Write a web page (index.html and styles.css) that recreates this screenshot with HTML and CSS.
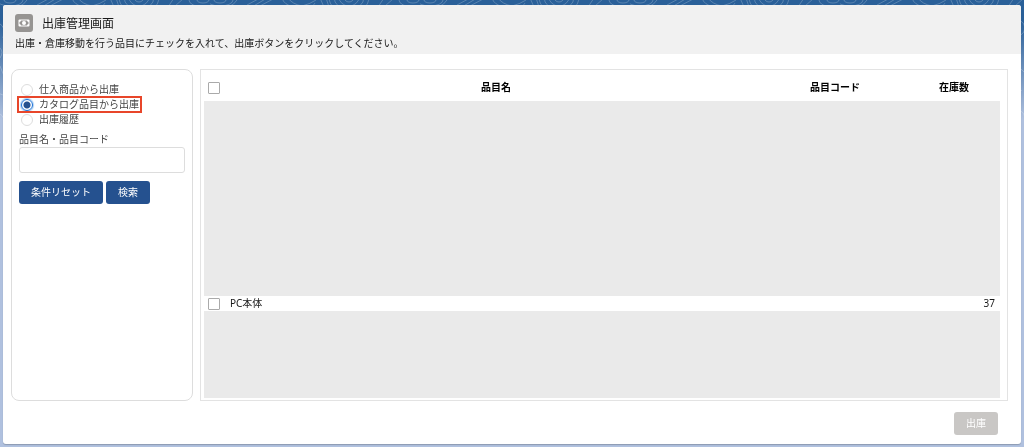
FILE: index.html
```html
<!DOCTYPE html>
<html lang="ja">
<head>
    <meta charset="UTF-8">
    <meta name="viewport" content="width=device-width, initial-scale=1.0">
    <title>出庫管理画面</title>
    <link rel="stylesheet" href="styles.css">
</head>
<body>
    <svg class="backdrop" aria-hidden="true">
        <defs>
            <pattern id="contour" width="210" height="90" patternUnits="userSpaceOnUse">
                <g fill="none" stroke="#fff" stroke-opacity="0.22">
                    <ellipse cx="10" cy="0" rx="6" ry="3"/>
                    <ellipse cx="10" cy="0" rx="13" ry="6"/>
                    <path d="M27 0Q24 5 18 7M37 5 50 -2M42 7 57 -2M48 7 65 -2"/>
                    <path d="M72 -2Q74 5 84 7M78 -2Q82 4 92 6M106 0Q100 4 92 6"/>
                    <path d="M110 -2 114 7M116 -2 119 7M102 7 105 3"/>
                    <ellipse cx="139" cy="-3" rx="5" ry="5"/>
                    <ellipse cx="139" cy="-3" rx="10" ry="9"/>
                    <ellipse cx="139" cy="-3" rx="15" ry="13"/>
                    <ellipse cx="139" cy="-3" rx="20" ry="17"/>
                    <path d="M168 7 174 -2M174 7 184 -2"/>
                    <ellipse cx="203" cy="0" rx="6" ry="3"/>
                    <ellipse cx="203" cy="0" rx="14" ry="7"/>
                    <path d="M0 24Q6 27 3 38M0 48Q4 52 0 58M0 66 4 76"/>
                    <path d="M180 20Q190 28 180 36M188 44Q180 52 190 60M178 66 190 78"/>
                </g>
            </pattern>
        </defs>
        <rect width="100%" height="120" fill="url(#contour)"/>
    </svg>

    <div class="card">
        <header class="card-header">
            <div class="title-row">
                <svg class="title-icon" viewBox="0 0 18 18" aria-hidden="true">
                    <rect width="18" height="18" rx="3" fill="#969492"/>
                    <rect x="3.5" y="5.5" width="11" height="7" rx="1" fill="#fff"/>
                    <path d="M6 6.5h6a1.6 1.6 0 0 0 1.5 1.5v2a1.6 1.6 0 0 0-1.5 1.5H6A1.6 1.6 0 0 0 4.500 10V8A1.6 1.6 0 0 0 6 6.500z" fill="#969492"/>
                    <circle cx="9" cy="9" r="2" fill="#fff"/>
                </svg>
                <h1>出庫管理画面</h1>
            </div>
            <p>出庫・倉庫移動を行う品目にチェックを入れて、出庫ボタンをクリックしてください。</p>
        </header>

        <main class="content">
            <form class="search-panel">
                <div class="radio-group" role="radiogroup" aria-label="出庫種別">
                    <label class="radio"><input type="radio" name="type" value="stock">仕入商品から出庫</label>
                    <label class="radio highlight"><input type="radio" name="type" value="catalog" checked>カタログ品目から出庫</label>
                    <label class="radio"><input type="radio" name="type" value="history">出庫履歴</label>
                </div>
                <label class="field-label" for="keyword">品目名・品目コード</label>
                <input class="text-input" type="text" id="keyword">
                <div class="button-row">
                    <button class="button" type="reset">条件リセット</button>
                    <button class="button" type="button">検索</button>
                </div>
            </form>

            <section class="table-panel">
                <table class="items">
                    <thead>
                        <tr>
                            <th class="col-check"><input type="checkbox" aria-label="すべて選択"></th>
                            <th>品目名</th>
                            <th class="col-code">品目コード</th>
                            <th class="col-count">在庫数</th>
                        </tr>
                    </thead>
                    <tbody>
                        <tr class="masked masked-top"><td colspan="4"></td></tr>
                        <tr>
                            <td class="col-check"><input type="checkbox" aria-label="PC本体を選択"></td>
                            <td>PC本体</td>
                            <td></td>
                            <td class="count">37</td>
                        </tr>
                        <tr class="masked masked-bottom"><td colspan="4"></td></tr>
                    </tbody>
                </table>
            </section>
        </main>

        <footer class="card-footer">
            <button class="button" type="button" disabled>出庫</button>
        </footer>
    </div>
</body>
</html>
```

FILE: styles.css
```css
* {
    box-sizing: border-box;
}

body {
    display: flex;
    min-height: 100vh;
    margin: 0;
    padding: 5px 3px 3px;
    background: linear-gradient(#2a6099 0, #2a6099 20px, #b0c1df 120px) no-repeat #b0c1df;
    color: #181818;
    font-family: "Noto Sans", "Noto Sans CJK JP", sans-serif;
    font-size: 10px;
    line-height: 15px;
}

.backdrop {
    position: fixed;
    inset: 0;
    z-index: -1;
    width: 100%;
    height: 100%;
}

.card {
    display: flex;
    flex: 1;
    flex-direction: column;
    border-radius: 3px;
    background: #fff;
    box-shadow: 0 1px 1px rgba(0, 0, 0, 0.2);
    overflow: hidden;
}

.card-header {
    padding: 9px 12px 3px;
    background: #f1f1f1;
}

.title-row {
    display: flex;
    align-items: center;
    gap: 9px;
    height: 18px;
    margin-bottom: 4px;
}

.title-icon {
    width: 18px;
    height: 18px;
}

h1 {
    margin: 0;
    font-size: 12px;
    font-weight: 400;
}

p {
    margin: 0;
}

.content {
    display: flex;
    flex: 1;
    gap: 7px;
    padding: 15px 13px 0 8px;
}

.search-panel {
    width: 182px;
    padding: 12px 7px;
    border: 1px solid #ddd;
    border-radius: 8px;
    color: #444;
}

.radio-group {
    display: flex;
    flex-direction: column;
    align-items: flex-start;
    margin-bottom: 5px;
}

.radio {
    display: flex;
    align-items: center;
    gap: 6px;
    height: 15px;
    margin-left: -1px;
    padding: 0 2px 0 3px;
}

.radio input {
    width: 12px;
    height: 12px;
    margin: 0;
    border: 1px solid #ddd;
    border-radius: 50%;
    background: #fff;
    appearance: none;
}

.radio input:checked {
    border-color: #1b72d8;
    background: radial-gradient(circle, #25518f 3px, #fff 4px);
    box-shadow: 0 0 1px 1px #a9cdf2;
}

.highlight {
    outline: 2px solid #e8462a;
    outline-offset: -1px;
}

.field-label {
    display: block;
}

.text-input {
    display: block;
    width: 100%;
    height: 26px;
    padding: 0 8px;
    border: 1px solid #ddd;
    border-radius: 3px;
    font: inherit;
}

.button-row {
    display: flex;
    gap: 3px;
    margin-top: 8px;
}

.button {
    height: 23px;
    padding: 0 12px;
    border: 0;
    border-radius: 3px;
    background: #25518f;
    color: #fff;
    font: inherit;
    white-space: nowrap;
}

.button:disabled {
    background: #c9c7c5;
}

.table-panel {
    flex: 1;
    padding: 0 7px 1px 3px;
    border: 1px solid #e3e3e3;
}

.items {
    width: 100%;
    border-collapse: collapse;
    table-layout: fixed;
}

.items th {
    height: 31px;
    padding: 4px 0 0;
    color: #000;
    font-weight: 700;
}

.items td {
    height: 15px;
    padding: 0;
}

.items .col-check {
    width: 26px;
    padding-left: 4px;
    text-align: left;
}

.col-code {
    width: 146px;
}

.col-count {
    width: 92px;
}

.items input {
    display: block;
    width: 12px;
    height: 12px;
    margin: 0;
    border: 1px solid #aaa;
    border-radius: 1px;
    background: #fff;
    appearance: none;
}

.items .count {
    padding-right: 5px;
    text-align: right;
}

.masked td {
    background: #eaeaea;
}

.masked-top td {
    height: 195px;
}

.masked-bottom td {
    height: 87px;
}

.card-footer {
    display: flex;
    justify-content: flex-end;
    padding: 11px 23px 9px;
}
```
